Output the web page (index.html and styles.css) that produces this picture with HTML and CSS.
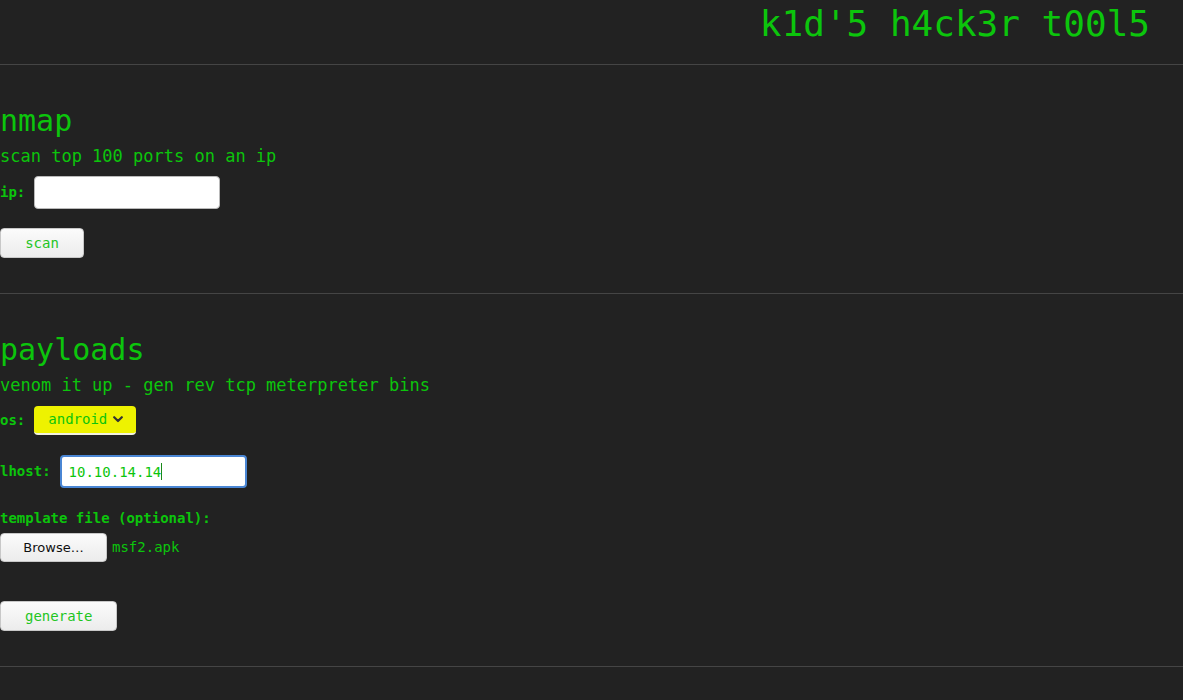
FILE: index.html
```html
<!DOCTYPE html>
<html>
<head>
<meta charset="utf-8">
<title>k1d'5 h4ck3r t00l5</title>
<link rel="stylesheet" href="styles.css">
</head>
<body>
<header class="top">
  <h1 class="brand">k1d'5 h4ck3r t00l5</h1>
</header>
<hr class="rule">
<section class="tool tool-nmap">
  <h2 class="tool-title">nmap</h2>
  <p class="tool-desc">scan top 100 ports on an ip</p>
  <div class="field field-first">
    <label class="lbl">ip:</label>
    <input class="txt" type="text">
  </div>
  <button class="btn btn-scan">scan</button>
</section>
<hr class="rule">
<section class="tool tool-payloads">
  <h2 class="tool-title">payloads</h2>
  <p class="tool-desc">venom it up - gen rev tcp meterpreter bins</p>
  <div class="field field-os">
    <label class="lbl">os:</label>
    <div class="sel">
      <span class="sel-text">android</span>
      <svg class="chev" width="10" height="7" viewBox="0 0 10 7"><path d="M1.2 1.2 L5 5 L8.8 1.2" fill="none" stroke="#333" stroke-width="2.2" stroke-linecap="round" stroke-linejoin="round"/></svg>
    </div>
  </div>
  <div class="field field-lhost">
    <label class="lbl">lhost:</label>
    <div class="txt txt-focus"><span>10.10.14.14</span><span class="caret"></span></div>
  </div>
  <div class="lbl lbl-block">template file (optional):</div>
  <div class="file-row">
    <button class="btn-browse">Browse…</button>
    <span class="file-name">msf2.apk</span>
  </div>
  <button class="btn btn-gen">generate</button>
</section>
<hr class="rule">
</body>
</html>
```
FILE: styles.css
```css
html, body {
  margin: 0;
  padding: 0;
  background: #222222;
}
body {
  font-family: "DejaVu Sans Mono", monospace;
  color: #0cc50c;
  width: 1183px;
  height: 700px;
  overflow: hidden;
}
.top {
  height: 64px;
  display: flex;
  justify-content: flex-end;
}
.brand {
  margin: 0;
  padding: 3px 33px 0 0;
  font-size: 36px;
  font-weight: normal;
  line-height: 42px;
  letter-spacing: 0;
}
.rule {
  margin: 0;
  border: 0;
  height: 1px;
  background: #454545;
}
.tool {
  display: flex;
  flex-direction: column;
  align-items: flex-start;
  padding: 38px 0 35px 0;
}
.tool-title {
  margin: 0;
  font-size: 30px;
  font-weight: normal;
  line-height: 36px;
}
.tool-desc {
  margin: 7px 0 0 0;
  font-size: 17px;
  line-height: 20px;
}
.field {
  display: flex;
  align-items: center;
  gap: 9px;
}
.field-first {
  margin-top: 10px;
}
.field-os {
  margin-top: 11px;
}
.field-lhost {
  margin-top: 20px;
}
.lbl {
  font-size: 14px;
  font-weight: bold;
  line-height: 17px;
}
.lbl-block {
  margin-top: 22px;
}
.txt {
  box-sizing: border-box;
  width: 186px;
  height: 33px;
  border: 1px solid #b9b9b9;
  border-radius: 4px;
  background: #ffffff;
  margin: 0;
  padding: 0 8px;
  font-family: "DejaVu Sans Mono", monospace;
  font-size: 14px;
  color: #0cc50c;
}
.txt-focus {
  width: 187px;
  border: 2px solid #4a86d4;
  display: flex;
  align-items: center;
  padding-left: 7px;
}
.caret {
  display: inline-block;
  width: 1px;
  height: 17px;
  background: #1a8a1a;
  margin-left: 0;
}
.sel {
  box-sizing: border-box;
  width: 102px;
  height: 29px;
  border-radius: 4px;
  background: #eef200;
  border-bottom: 2px solid #f2f2e0;
  display: flex;
  align-items: center;
  padding: 0 0 0 14px;
  font-size: 14px;
}
.sel-text {
  line-height: 17px;
}
.chev {
  margin-left: 6px;
}
.btn {
  box-sizing: border-box;
  height: 30px;
  border: 1px solid #c8c8c8;
  border-radius: 4px;
  background: linear-gradient(#fbfbfb, #ececec);
  font-family: "DejaVu Sans Mono", monospace;
  font-size: 14px;
  color: #1fc51f;
  padding: 0 24px;
  margin: 0;
}
.btn-scan {
  margin-top: 19px;
  width: 84px;
}
.btn-gen {
  margin-top: 39px;
  width: 117px;
}
.file-row {
  margin-top: 6px;
  display: flex;
  align-items: center;
  gap: 5px;
}
.btn-browse {
  box-sizing: border-box;
  width: 107px;
  height: 29px;
  border: 1px solid #c8c8c8;
  border-radius: 4px;
  background: linear-gradient(#fbfbfb, #ececec);
  font-family: "DejaVu Sans", sans-serif;
  font-size: 13px;
  color: #111111;
  margin: 0;
  padding: 0;
}
.file-name {
  font-size: 14px;
  line-height: 17px;
}
```
